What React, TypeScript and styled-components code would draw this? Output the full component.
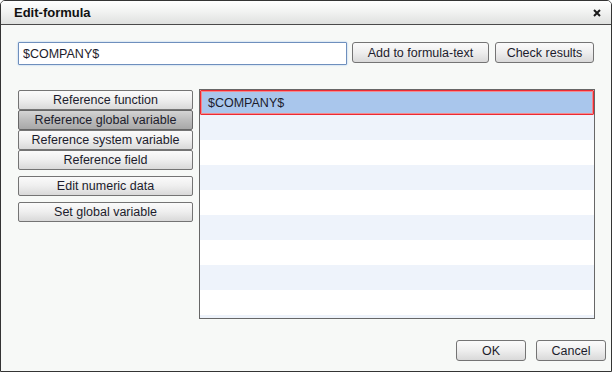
import React from 'react';
import styled, { createGlobalStyle, css } from 'styled-components';

const GlobalStyle = createGlobalStyle`
  html, body {
    margin: 0;
    padding: 0;
    background: #ffffff;
  }
  * {
    box-sizing: border-box;
  }
`;

const SIDE_ACTIONS = [
  { id: 1, title: 'Reference function', pressed: false },
  { id: 2, title: 'Reference global variable', pressed: true },
  { id: 3, title: 'Reference system variable', pressed: false },
  { id: 4, title: 'Reference field', pressed: false },
];

const ROWS = ['$COMPANY$', '', '', '', '', '', '', '', '', ''];

const App = () => {
  return (
    <>
      <GlobalStyle />
      <Dialog>
        <TitleBar>
          <Title>Edit-formula</Title>
          <CloseIcon viewBox="0 0 8 8">
            <path d="M1 1 L7 7 M7 1 L1 7" stroke="#1a1a1a" strokeWidth="2" />
          </CloseIcon>
        </TitleBar>
        <Content>
          <FormulaRow>
            <FormulaInput defaultValue="$COMPANY$" />
            <Button $width={137}>Add to formula-text</Button>
            <Button $width={99}>Check results</Button>
          </FormulaRow>
          <Main>
            <SideColumn>
              <ButtonStack>
                {SIDE_ACTIONS.map(({ id, title, pressed }) => (
                  <SideButton key={id} $pressed={pressed}>
                    {title}
                  </SideButton>
                ))}
              </ButtonStack>
              <SideButton>Edit numeric data</SideButton>
              <SideButton>Set global variable</SideButton>
            </SideColumn>
            <ResultList>
              {ROWS.map((text, i) => (
                <ResultRow key={i} $odd={i % 2 === 1} $selected={i === 0}>
                  {text}
                </ResultRow>
              ))}
            </ResultList>
          </Main>
        </Content>
        <Footer>
          <Button $width={70}>OK</Button>
          <Button $width={70}>Cancel</Button>
        </Footer>
      </Dialog>
    </>
  );
};

export default App;

const Dialog = styled.div`
  width: 612px;
  height: 372px;
  border: 1px solid #343434;
  border-radius: 5px 5px 0 0;
  background: #f7f9f7;
  display: flex;
  flex-direction: column;
  overflow: hidden;
  font-family: 'Liberation Sans', Arial, sans-serif;
  font-size: 12.5px;
  color: #1c1c2c;
`;

const TitleBar = styled.div`
  height: 24px;
  flex: none;
  display: flex;
  align-items: center;
  justify-content: space-between;
  padding: 0 10px 0 13px;
  background: linear-gradient(#ffffff, #f2f3f2 45%, #dfe1df);
  border-bottom: 1px solid #4a4a4a;
`;

const Title = styled.span`
  font-weight: bold;
  font-size: 13px;
  color: #111;
`;

const CloseIcon = styled.svg`
  width: 8px;
  height: 8px;
`;

const Content = styled.div`
  flex: 1;
  padding: 17px 16px 0 17px;
  display: flex;
  flex-direction: column;
`;

const FormulaRow = styled.div`
  display: flex;
  align-items: flex-start;
  gap: 5px;
  height: 22px;
`;

const FormulaInput = styled.input`
  width: 329px;
  height: 23px;
  margin: 0;
  padding: 0 0 0 4px;
  border: 1px solid #6e8fbd;
  border-radius: 1px;
  box-shadow: 0 0 2px #9ec3ea;
  background: #ffffff;
  font-family: inherit;
  font-size: 12.5px;
  color: #1c1c2c;
  outline: none;
`;

const buttonFace = css`
  margin: 0;
  padding: 0;
  border: 1px solid #747474;
  border-radius: 3px;
  background: linear-gradient(#fbfbfb, #eeeeee 50%, #d9d9d9);
  font-family: inherit;
  font-size: 12.5px;
  color: #1c1c2c;
  cursor: pointer;
`;

const Button = styled.button<{ $width: number }>`
  ${buttonFace};
  width: ${({ $width }) => $width}px;
  height: 21px;
  & + & {
    margin-left: 1px;
  }
`;

const Main = styled.div`
  display: flex;
  align-items: flex-start;
  gap: 6px;
  margin-top: 25px;
`;

const SideColumn = styled.div`
  width: 175px;
  margin-top: 1px;
  display: flex;
  flex-direction: column;
  gap: 6px;
`;

const ButtonStack = styled.div`
  display: flex;
  flex-direction: column;
`;

const SideButton = styled.button<{ $pressed?: boolean }>`
  ${buttonFace};
  width: 175px;
  height: 20px;
  border-radius: 2px;
  ${({ $pressed }) =>
    $pressed &&
    css`
      background: linear-gradient(#d4d4d4, #bcbcbc 50%, #a8a8a8);
      border-color: #666;
    `}
`;

const ResultList = styled.div`
  width: 397px;
  height: 230px;
  border: 1px solid #676767;
  background: #ffffff;
  overflow: hidden;
`;

const ResultRow = styled.div<{ $odd: boolean; $selected: boolean }>`
  height: 25px;
  display: flex;
  align-items: center;
  padding-left: 7px;
  background: ${({ $odd }) => ($odd ? '#eef3fb' : '#ffffff')};
  ${({ $selected }) =>
    $selected &&
    css`
      background: #a9c6ec;
      border: 1px solid #ec2a33;
      border-radius: 1px;
      box-shadow: inset 0 0 0 1px #f08a8f;
    `}
`;

const Footer = styled.div`
  flex: none;
  display: flex;
  justify-content: flex-end;
  gap: 9px;
  padding: 0 5px 10px 0;
`;
